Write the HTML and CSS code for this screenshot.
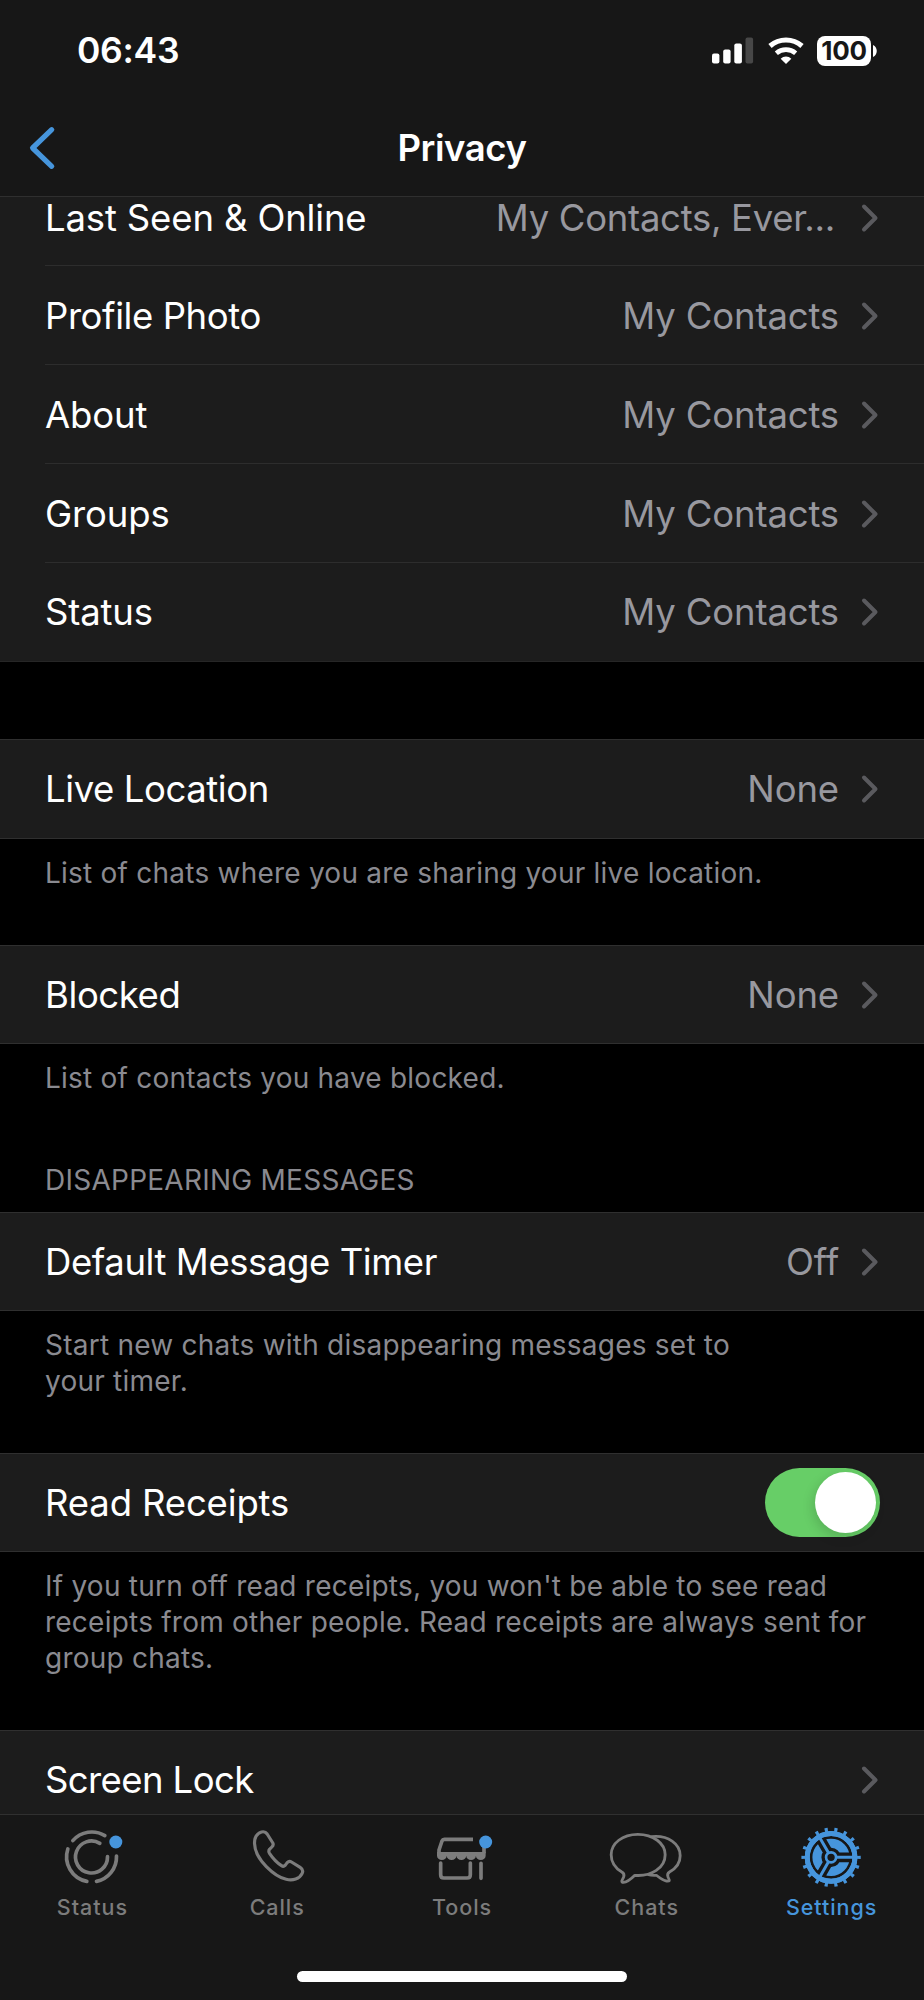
FILE: index.html
```
<!DOCTYPE html>
<html lang="en">
<head>
<meta charset="utf-8">
<title>Privacy</title>
<link rel="stylesheet" href="styles.css">
</head>
<body>
<svg width="0" height="0" class="defs">
  <symbol id="chevron" viewBox="0 0 18 30"><path d="M3 3.5 14.5 15 3 26.5" fill="none" stroke="currentColor" stroke-width="4" stroke-linecap="round" stroke-linejoin="round"/></symbol>
</svg>
<div class="screen">
  <header class="top">
    <div class="statusbar">
      <span class="time">06:43</span>
      <div class="indicators">
        <svg class="signal" viewBox="0 0 42 28">
          <rect x="0" y="16.5" width="7.4" height="10" rx="2" fill="#fff"/>
          <rect x="11.2" y="12.5" width="7.4" height="14" rx="2" fill="#fff"/>
          <rect x="22.3" y="6.5" width="7.6" height="20" rx="2" fill="#fff"/>
          <rect x="33.5" y="0.5" width="7.6" height="26" rx="2" fill="#474747"/>
        </svg>
        <svg class="wifi" viewBox="916 108 108 84" fill="none" stroke="#fff">
          <path d="M922 135A73 73 0 0 1 1018 135" stroke-width="15"/>
          <path d="M941 157A44 44 0 0 1 999 157" stroke-width="14"/>
          <path d="M954 173A23 23 0 0 1 986 173L970 189Z" fill="#fff" stroke="none"/>
        </svg>
        <div class="battery">
          <span class="level">100</span>
          <svg class="nub" viewBox="0 0 4 12"><path d="M0 0C5 2 5 10 0 12Z" fill="#fff"/></svg>
        </div>
      </div>
    </div>
    <nav class="navbar">
      <svg class="back" viewBox="28 124 30 46"><path d="M51.7 128.7 32.6 147 51.7 165.3" fill="none" stroke="#4695dc" stroke-width="5.2" stroke-linecap="round" stroke-linejoin="round"/></svg>
      <h1>Privacy</h1>
      <span></span>
    </nav>
  </header>

  <main class="content">
    <section class="group visibility">
      <div class="row"><span class="label wide">Last Seen &amp; Online</span><span class="value cut">My Contacts, Ever...</span><svg class="chev"><use href="#chevron"/></svg></div>
      <div class="row"><span class="label">Profile Photo</span><span class="value">My Contacts</span><svg class="chev"><use href="#chevron"/></svg></div>
      <div class="row"><span class="label wide">About</span><span class="value">My Contacts</span><svg class="chev"><use href="#chevron"/></svg></div>
      <div class="row"><span class="label wide">Groups</span><span class="value">My Contacts</span><svg class="chev"><use href="#chevron"/></svg></div>
      <div class="row"><span class="label wide">Status</span><span class="value">My Contacts</span><svg class="chev"><use href="#chevron"/></svg></div>
    </section>

    <section class="group single location">
      <div class="row"><span class="label">Live Location</span><span class="value">None</span><svg class="chev"><use href="#chevron"/></svg></div>
    </section>
    <p class="note note-location">List of chats where you are sharing your live location.</p>

    <section class="group single">
      <div class="row"><span class="label">Blocked</span><span class="value">None</span><svg class="chev"><use href="#chevron"/></svg></div>
    </section>
    <p class="note note-blocked">List of contacts you have blocked.</p>

    <h2 class="heading">DISAPPEARING MESSAGES</h2>
    <section class="group single">
      <div class="row"><span class="label">Default Message Timer</span><span class="value">Off</span><svg class="chev"><use href="#chevron"/></svg></div>
    </section>
    <p class="note note-timer">Start new chats with disappearing messages set to<br>your timer.</p>

    <section class="group single">
      <div class="row"><span class="label wide">Read Receipts</span><span class="toggle"><span class="knob"></span></span></div>
    </section>
    <p class="note note-receipts">If you turn off read receipts, you won't be able to see read<br>receipts from other people. Read receipts are always sent for<br>group chats.</p>

    <section class="group single">
      <div class="row"><span class="label tight">Screen Lock</span><svg class="chev"><use href="#chevron"/></svg></div>
    </section>
  </main>

  <footer class="bottom">
    <div class="tabs">
      <div class="tab">
        <svg viewBox="155.5 78 240 186" fill="none" stroke="currentColor" stroke-width="11" stroke-linecap="round">
          <path d="M218 122A75 75 0 0 1 314 107M349 168A75 75 0 0 1 289 244M260 244A75 75 0 0 1 203 147"/>
          <path d="M322 170A48 48 0 1 1 299 130"/>
          <circle cx="347" cy="126" r="19.5" fill="#4695dc" stroke="none"/>
        </svg>
        <span>Status</span>
      </div>
      <div class="tab">
        <svg viewBox="710.5 78 240 186" fill="none" stroke="currentColor" stroke-width="9.5" stroke-linejoin="round">
          <path d="M801 102L818 129Q821 135 815 141L808 148Q804 153 808 160Q824 184 844 197Q850 201 855 196L861 188Q867 182 874 186L900 202Q911 209 906 220C898 237 878 243 858 238C825 230 764 180 763 130C763 111 771 100 784 96Q795 93 801 102Z"/>
        </svg>
        <span>Calls</span>
      </div>
      <div class="tab">
        <svg viewBox="336 78 240 186" fill="none" stroke="currentColor" stroke-width="11" stroke-linecap="round" stroke-linejoin="round">
          <path d="M489 118H403Q398 118 396 123L387 150V160M522 160V138" stroke-linecap="butt"/>
          <path d="M381 156H527V167A14.6 13 0 0 1 497.8 167A14.6 13 0 0 1 468.6 167A14.6 13 0 0 1 439.4 167A14.6 13 0 0 1 410.2 167A14.6 13 0 0 1 381 167Z" fill="currentColor" stroke="none"/>
          <path d="M392 189V224Q392 234 402 234H471Q481 234 481 224V189M513 190V235"/>
          <circle cx="527" cy="126" r="19.5" fill="#4695dc" stroke="none"/>
        </svg>
        <span>Tools</span>
      </div>
      <div class="tab">
        <svg viewBox="21.5 18 240 186" fill="none" stroke="currentColor" stroke-width="8.5" stroke-linejoin="round" stroke-linecap="round">
          <path d="M105 166C155 170 196 143 196 104C196 70 160 43 114 43C68 43 34 70 34 104C34 127 48 145 66 156C73 160 74 165 71 172C67 180 62 187 71 187C84 187 95 176 105 166Z"/>
          <path d="M156 50C205 45 241 72 241 107C241 130 225 147 209 156C202 160 202 165 205 172C211 183 209 184 200 183C188 181 178 172 170 166C164 166 155 167 146 164"/>
        </svg>
        <span>Chats</span>
      </div>
      <div class="tab active">
        <svg viewBox="533.8 78 240 186" fill="none" stroke="currentColor">
          <circle cx="651" cy="172" r="71.5" stroke-width="15"/>
          <circle cx="651" cy="172" r="83" stroke-width="12" pathLength="360" stroke-dasharray="6.5 13.5" stroke-dashoffset="3.25"/>
          <circle cx="651" cy="172" r="42.5" stroke-width="27"/>
          <path d="M651 172H713M651 172L620 118.3M651 172L620 225.7" stroke="#171717" stroke-width="29"/>
          <circle cx="651" cy="172" r="71.5" stroke-width="15"/>
          <path d="M651 172H717M651 172L618 114.8M651 172L618 229.2" stroke-width="9"/>
          <circle cx="651" cy="172" r="15" stroke-width="8" fill="#171717"/>
        </svg>
        <span>Settings</span>
      </div>
    </div>
    <div class="home"></div>
  </footer>
</div>
</body>
</html>
```
FILE: styles.css
```
* { box-sizing: border-box; }
body {
  margin: 0;
  background: #000;
  color: #fff;
  font-family: Inter, "Liberation Sans", sans-serif;
}
.defs { display: none; }
.screen {
  width: 924px;
  height: 2000px;
  display: flex;
  flex-direction: column;
  overflow: hidden;
}

.top {
  flex: none;
  height: 197px;
  background: #171717;
  border-bottom: 1px solid #2f2f2f;
}
.statusbar {
  height: 101px;
  padding: 0 47px 0 77px;
  display: flex;
  align-items: center;
  justify-content: space-between;
}
.time {
  font-size: 35.5px;
  font-weight: 600;
  letter-spacing: -0.3px;
}
.indicators { display: flex; align-items: center; }
.signal { width: 42px; height: 28px; margin-right: 14px; }
.wifi { width: 36px; height: 28px; margin-right: 13px; }
.battery { display: flex; align-items: center; gap: 2px; }
.level {
  width: 54px;
  height: 30px;
  border-radius: 8px;
  background: #fff;
  color: #171717;
  font-size: 26px;
  font-weight: 700;
  line-height: 30px;
  letter-spacing: -0.3px;
  text-align: center;
}
.nub { width: 4px; height: 12px; }

.navbar {
  height: 93px;
  padding: 0 28px;
  display: grid;
  grid-template-columns: 1fr auto 1fr;
  align-items: center;
}
.back { width: 30px; height: 46px; }
.navbar h1 {
  margin: 0;
  font-size: 36.5px;
  font-weight: 600;
  letter-spacing: -0.43px;
}

.content { flex: 1; min-height: 0; overflow: hidden; }
.group { background: #1c1c1c; }
.row {
  display: flex;
  align-items: center;
  height: 99px;
  padding: 0 45px;
  font-size: 36.5px;
}
.visibility { margin: -30px 0 77px; border-bottom: 1px solid #262626; }
.visibility .row {
  background: linear-gradient(#2d2d2d, #2d2d2d) 45px 100% / 100% 1px no-repeat;
}
.visibility .row:first-child { padding-top: 2px; }
.visibility .row:last-child { height: 98px; background: none; }
.single { border-top: 1px solid #2f2f2f; border-bottom: 1px solid #2f2f2f; }
.single .row { height: 97px; }
.location .row { height: 98px; }
.label { flex: 1; letter-spacing: -0.42px; }
.wide { letter-spacing: -0.15px; }
.tight { letter-spacing: -0.6px; }
.value { color: #98989f; margin-right: 22px; letter-spacing: -0.15px; }
.cut { letter-spacing: -0.3px; margin-right: 26px; }
.chev { width: 18px; height: 30px; color: #5a5a5e; }

.note, .heading {
  margin: 0;
  padding: 0 45px;
  color: #8a8a90;
  font-size: 28px;
  font-weight: 400;
  line-height: 35.8px;
  letter-spacing: 0.23px;
  white-space: nowrap;
}
.note { padding-top: 17px; }
.note-location { height: 106px; }
.note-blocked { height: 119px; }
.note-timer { height: 142px; }
.note-receipts { height: 178px; }
.heading { height: 49px; letter-spacing: 0.25px; }

.toggle {
  display: flex;
  justify-content: flex-end;
  width: 115px;
  height: 69px;
  margin-right: -1px;
  padding: 4px 4.5px;
  border-radius: 35px;
  background: #67ce67;
}
.knob {
  width: 61px;
  height: 61px;
  border-radius: 50%;
  background: #fff;
  box-shadow: -2px 4px 12px rgba(0, 0, 0, 0.15);
}

.bottom {
  flex: none;
  height: 186px;
  background: #171717;
  border-top: 1px solid #303030;
  display: flex;
  flex-direction: column;
  align-items: center;
}
.tabs { width: 100%; height: 156px; display: grid; grid-template-columns: repeat(5, 1fr); }
.tab {
  display: flex;
  flex-direction: column;
  align-items: center;
  padding-top: 11px;
  color: #7c7c7c;
  font-size: 21.5px;
  font-weight: 500;
  letter-spacing: 0.95px;
}
.tab svg { width: 80px; height: 62px; }
.tab span { margin-top: 6px; line-height: 26px; }
.active { color: #4695dc; }
.home { width: 330px; height: 11px; border-radius: 6px; background: #fff; }
```
